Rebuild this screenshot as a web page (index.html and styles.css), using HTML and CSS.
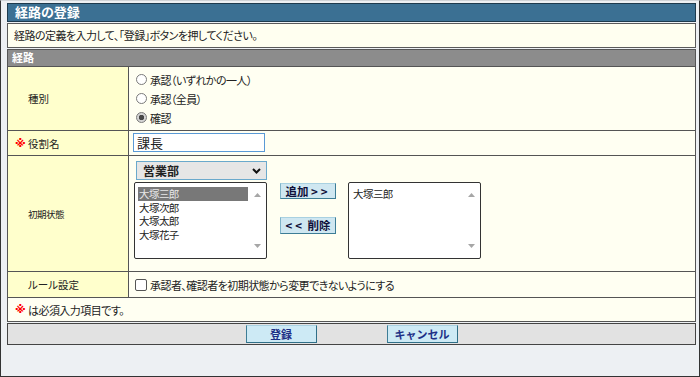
FILE: index.html
```html
<!DOCTYPE html>
<html lang="ja">
<head>
  <meta charset="UTF-8" />
  <title>経路の登録</title>
  <link rel="stylesheet" href="styles.css">
</head>
<body>
<div class="frame">

  <div class="title-bar">経路の登録</div>
  <div class="desc">経路の定義を入力して、「登録」ボタンを押してください。</div>

  <!-- 経路 -->
  <div class="section">
    <div class="section-head">経路</div>

    <div class="row row-type">
      <div class="label">種別</div>
      <div class="value radios">
        <label class="opt"><input type="radio" name="kind" /><span>承認（いずれかの一人）</span></label>
        <label class="opt"><input type="radio" name="kind" /><span>承認（全員）</span></label>
        <label class="opt"><input type="radio" name="kind" checked /><span>確認</span></label>
      </div>
    </div>

    <div class="row row-name">
      <div class="label"><span class="req">※</span>役割名</div>
      <div class="value">
        <input type="text" class="text-input" value="課長" />
      </div>
    </div>

    <div class="row row-init">
      <div class="label label-small">初期状態</div>
      <div class="value">
        <div class="select">
          <span>営業部</span>
          <svg width="9" height="6" viewBox="0 0 9 6"><polyline points="1,1 4.5,4.5 8,1" fill="none" stroke="#111" stroke-width="2"/></svg>
        </div>
        <div class="pickers">
          <div class="listbox">
            <ul class="items">
              <li class="selected">大塚三郎</li>
              <li>大塚次郎</li>
              <li>大塚太郎</li>
              <li>大塚花子</li>
            </ul>
            <div class="scroll">
              <svg width="7" height="4" viewBox="0 0 7 4"><polygon points="0,4 3.5,0 7,4" fill="#a6a6a6"/></svg>
              <svg width="7" height="4" viewBox="0 0 7 4"><polygon points="0,0 3.5,4 7,0" fill="#a6a6a6"/></svg>
            </div>
          </div>
          <div class="move-buttons">
            <button class="move-btn">追加 <span class="arrows">&gt;&gt;</span></button>
            <button class="move-btn move-del"><span class="arrows">&lt;&lt;</span> 削除</button>
          </div>
          <div class="listbox">
            <ul class="items">
              <li>大塚三郎</li>
            </ul>
            <div class="scroll">
              <svg width="7" height="4" viewBox="0 0 7 4"><polygon points="0,4 3.5,0 7,4" fill="#a6a6a6"/></svg>
              <svg width="7" height="4" viewBox="0 0 7 4"><polygon points="0,0 3.5,4 7,0" fill="#a6a6a6"/></svg>
            </div>
          </div>
        </div>
      </div>
    </div>

    <div class="row row-rule">
      <div class="label">ルール設定</div>
      <div class="value">
        <label class="opt"><input type="checkbox" /><span>承認者、確認者を初期状態から変更できないようにする</span></label>
      </div>
    </div>

    <div class="note"><span class="req">※</span>は必須入力項目です。</div>
  </div>

  <!-- ボタン -->
  <div class="button-bar">
    <button class="main-btn">登録</button>
    <button class="main-btn">キャンセル</button>
  </div>

</div>
</body>
</html>
```

FILE: styles.css
```css
* {
  box-sizing: border-box;
}

html, body {
  margin: 0;
  padding: 0;
}

body {
  font-family: "Noto Sans CJK JP", "Noto Sans", sans-serif;
  font-size: 11px;
  font-feature-settings: "palt";
  letter-spacing: -0.55px;
  color: #222;
  background: #edf0f3;
}

.frame {
  height: 377px;
  border: 1px solid #333;
  border-top-color: #cfd3d7;
  padding: 2px 3px 0 6px;
}

.title-bar {
  height: 19px;
  background: #3b7093;
  border: 1px solid #1d3a4d;
  color: #fff;
  font-size: 13px;
  font-weight: bold;
  letter-spacing: 0;
  line-height: 16px;
  padding-left: 7px;
}

.desc {
  margin-top: 1px;
  height: 25px;
  background: #fffff0;
  border: 1px solid #5a5a5a;
  line-height: 22px;
  padding-left: 6px;
}

.section {
  margin-top: 1px;
  border: 1px solid #555;
  background: #fffff2;
}

.section-head {
  height: 17px;
  background: #8c8c8c;
  border-bottom: 1px solid #555;
  color: #fff;
  font-weight: bold;
  letter-spacing: 0;
  line-height: 15px;
  padding-left: 4px;
}

.row {
  display: grid;
  grid-template-columns: 121px 1fr;
  border-bottom: 1px solid #555;
}

.row-type { height: 64px; }
.row-name { height: 25px; }
.row-init { height: 116px; }
.row-rule { height: 26px; }

.label {
  display: flex;
  align-items: center;
  padding-left: 20px;
  background: #ffffcc;
  border-right: 1px solid #555;
  font-size: 10.5px;
  letter-spacing: 0;
}

.label-small {
  font-size: 9.5px;
  letter-spacing: -0.5px;
}

.req {
  color: #ff0000;
  width: 13px;
  margin-left: -13px;
  font-size: 11px;
  font-weight: bold;
  font-family: "DejaVu Sans", sans-serif;
}

.value {
  padding-left: 7px;
}

/* ラジオ・チェック */
.radios {
  padding-top: 3px;
}

.opt {
  display: flex;
  align-items: center;
  height: 19px;
}

.opt input {
  appearance: none;
  margin: 0 3px 0 0;
  width: 11px;
  height: 11px;
  border: 1px solid #7a7a7a;
  background: #fff;
}

.opt input[type="radio"] {
  border-radius: 50%;
}

.opt input[type="radio"]:checked {
  background: radial-gradient(circle, #474747 0 2.5px, #d4d4d4 3px);
}

.opt input[type="checkbox"] {
  width: 12px;
  height: 12px;
  border-color: #555;
  border-radius: 2px;
}

.row-rule .value {
  display: flex;
  align-items: center;
  padding-left: 6px;
}

/* 役割名 */
.row-name .value {
  padding: 2px 0 0 4px;
}

.text-input {
  display: block;
  width: 132px;
  height: 19px;
  margin: 0;
  padding: 0 3px;
  border: 1px solid #5a9ad6;
  font-family: inherit;
  font-size: 13px;
  letter-spacing: 0;
  color: #222;
  background: #fff;
  outline: none;
}

/* 初期状態 */
.row-init .value {
  padding: 5px 0 0 5px;
}

.select {
  display: flex;
  align-items: center;
  justify-content: space-between;
  width: 131px;
  height: 19px;
  margin-left: 2px;
  padding: 0 5px 0 6px;
  border: 1px solid #6aa9cc;
  background: #e6e6e6;
  font-weight: bold;
  font-size: 12px;
  letter-spacing: 0;
}

.pickers {
  display: flex;
  margin-top: 2px;
}

.listbox {
  display: flex;
  width: 133px;
  height: 77px;
  border: 1px solid #333;
  border-radius: 2px;
  background: #fff;
}

.items {
  flex: 1;
  list-style: none;
  margin: 0;
  padding: 4px 1px 0 3px;
  font-size: 10.5px;
  line-height: 13.5px;
}

.items li {
  padding-left: 1px;
}

.items li.selected {
  background: #787878;
  color: #e8e8e8;
}

.scroll {
  width: 17px;
  display: flex;
  flex-direction: column;
  justify-content: space-between;
  align-items: center;
  padding: 10px 0 10px;
}

.move-buttons {
  display: flex;
  flex-direction: column;
  align-items: flex-start;
  margin: 1px 12px 0 13px;
}

.move-btn {
  width: 56px;
  height: 16px;
  padding: 0;
  font-family: inherit;
  font-size: 11.5px;
  font-weight: bold;
  letter-spacing: 0;
  line-height: 13px;
  color: #10103a;
  background: #cfe7f1;
  border: 1px solid;
  border-color: #a9d1e1 #3d7d96 #3d7d96 #7fb3c8;
}

.move-del {
  height: 17px;
  margin-top: 18px;
}

.arrows {
  letter-spacing: 3px;
}

/* 必須 */
.note {
  height: 23px;
  display: flex;
  align-items: center;
  padding-left: 20px;
}

/* ボタンバー */
.button-bar {
  margin-top: 1px;
  height: 22px;
  display: flex;
  justify-content: center;
  gap: 70px;
  background: #e2e2e2;
  border: 1px solid #444;
  padding-top: 1px;
}

.main-btn {
  width: 71px;
  height: 18px;
  padding: 0;
  font-family: inherit;
  font-size: 11px;
  font-weight: bold;
  font-feature-settings: normal;
  letter-spacing: 0;
  line-height: 15px;
  color: #1d2f86;
  background: #cdeaf5;
  border: 1px solid;
  border-color: #a9d1e1 #2f6f88 #2f6f88 #3d7d96;
}
```
